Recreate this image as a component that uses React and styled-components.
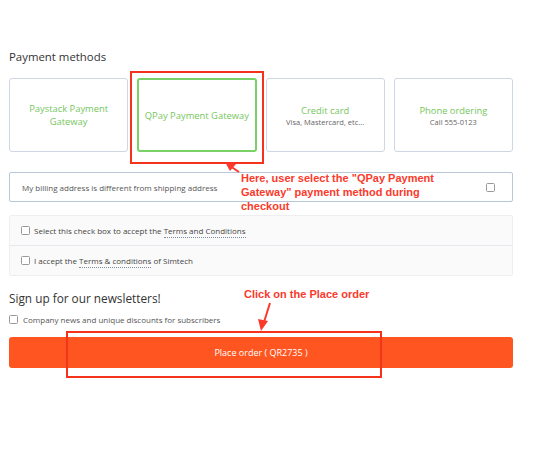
import React from 'react';
import styled, { createGlobalStyle } from 'styled-components';

const Global = createGlobalStyle`
	body {
		margin: 0;
		background: #fff;
		font-family: "Open Sans", "Liberation Sans", sans-serif;
		color: #333;
	}
`;

const Page = styled.div`
	position: relative;
	width: 550px;
	height: 450px;
	padding: 48px 37px 0 9px;
	box-sizing: border-box;
`;

const SectionTitle = styled.h2`
	margin: 0;
	font-size: ${p => (p.big ? '11.8px' : '11.4px')};
	font-weight: 400;
	color: #333;
	line-height: 18px;
`;

const Methods = styled.div`
	display: grid;
	grid-template-columns: repeat(4, minmax(0, 1fr));
	gap: 9px;
	margin-top: 12px;
`;

const Card = styled.div`
	height: 74px;
	box-sizing: border-box;
	border: ${p => (p.selected ? '2px solid #7ad166' : '1px solid #cdd6e1')};
	border-radius: 3px;
	display: flex;
	flex-direction: column;
	align-items: center;
	justify-content: center;
	text-align: center;
	padding: 0 14px;
`;

const CardTitle = styled.div`
	color: #76c660;
	font-size: 9.4px;
	line-height: 13px;
	white-space: ${p => (p.nowrap ? 'nowrap' : 'normal')};
`;

const CardSub = styled.div`
	color: #666;
	font-size: 7.5px;
	line-height: 10px;
`;

const BillingBox = styled.div`
	margin-top: 20px;
	height: 30px;
	box-sizing: border-box;
	border: 1px solid #b9c7da;
	border-radius: 2px;
	display: flex;
	align-items: center;
	justify-content: space-between;
	padding: 0 17px 0 12px;
	font-size: 8px;
	color: #555;
`;

const Box = styled.span`
	display: inline-block;
	width: 7px;
	height: 7px;
	border: 1px solid #999;
	border-radius: 1.5px;
	background: #fff;
	flex-shrink: 0;
`;

const Terms = styled.div`
	margin-top: 13px;
	border: 1px solid #eceef1;
	border-radius: 2px;
	background: #fafafa;
`;

const TermRow = styled.label`
	display: flex;
	align-items: center;
	gap: 4px;
	height: 29px;
	padding: 0 11px;
	font-size: 8px;
	color: #444;
	& + & {
		border-top: 1px solid #e6e9ed;
	}
`;

const Link = styled.span`
	border-bottom: 1px dotted #7a8aa0;
	padding-bottom: 1px;
`;

const Newsletter = styled.div`
	margin-top: 13px;
`;

const NewsRow = styled.div`
	display: flex;
	align-items: center;
	gap: 5px;
	margin-top: 7px;
	font-size: 8px;
	color: #555;
`;

const PlaceOrder = styled.button`
	display: block;
	width: 100%;
	height: 31px;
	margin-top: 12px;
	border: none;
	border-radius: 3px;
	background: #ff5520;
	color: #fff;
	font-family: "Open Sans", "Liberation Sans", sans-serif;
	font-size: 9px;
`;

const Highlight = styled.div`
	position: absolute;
	border: 2px solid #f5321c;
	box-sizing: border-box;
	left: ${p => p.x}px;
	top: ${p => p.y}px;
	width: ${p => p.w}px;
	height: ${p => p.h}px;
	pointer-events: none;
`;

const Note = styled.div`
	position: absolute;
	left: ${p => p.x}px;
	top: ${p => p.y}px;
	width: ${p => p.w}px;
	color: #fb3a2c;
	font-family: "Liberation Sans", Arial, sans-serif;
	font-weight: 700;
	font-size: 11px;
	line-height: 14px;
`;

const Arrow = styled.svg`
	position: absolute;
	left: 0;
	top: 0;
	pointer-events: none;
`;

const methods = [
	{ title: 'Paystack Payment Gateway' },
	{ title: 'QPay Payment Gateway', selected: true },
	{ title: 'Credit card', sub: 'Visa, Mastercard, etc...' },
	{ title: 'Phone ordering', sub: 'Call 555-0123' },
];

const App = () => {
	return (
		<Page>
			<Global />
			<SectionTitle>Payment methods</SectionTitle>
			<Methods>
				{methods.map(m => (
					<Card key={m.title} selected={m.selected}>
						<CardTitle nowrap={m.selected}>{m.title}</CardTitle>
						{m.sub && <CardSub>{m.sub}</CardSub>}
					</Card>
				))}
			</Methods>

			<BillingBox>
				<span>My billing address is different from shipping address</span>
				<Box />
			</BillingBox>

			<Terms>
				<TermRow>
					<Box />
					<span>
						Select this check box to accept the <Link>Terms and Conditions</Link>
					</span>
				</TermRow>
				<TermRow>
					<Box />
					<span>
						I accept the <Link>Terms &amp; conditions</Link> of Simtech
					</span>
				</TermRow>
			</Terms>

			<Newsletter>
				<SectionTitle big>Sign up for our newsletters!</SectionTitle>
				<NewsRow>
					<Box />
					<span>Company news and unique discounts for subscribers</span>
				</NewsRow>
			</Newsletter>

			<PlaceOrder>Place order ( QR2735 )</PlaceOrder>

			<Highlight x={130} y={71} w={134} h={93} />
			<Highlight x={66} y={331} w={316} h={47} />

			<Note x={241} y={171} w={230}>
				Here, user select the "QPay Payment Gateway" payment method during checkout
			</Note>
			<Note x={244} y={287} w={200}>
				Click on the Place order
			</Note>

			<Arrow width="550" height="450" viewBox="0 0 550 450">
				<line x1="239" y1="172" x2="230" y2="166" stroke="#fb3a2c" strokeWidth="2" />
				<polygon points="225,162 236,164 230,171" fill="#fb3a2c" />
				<line x1="270" y1="303" x2="264" y2="322" stroke="#fb3a2c" strokeWidth="2" />
				<polygon points="261,331 258,319 268,321" fill="#fb3a2c" />
			</Arrow>
		</Page>
	);
};

export default App;
